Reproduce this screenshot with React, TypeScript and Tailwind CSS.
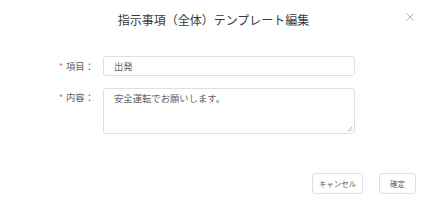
export default function App() {
  return (
    <div
      className="w-[427px] h-[203px] bg-white relative overflow-hidden"
      style={{ fontFamily: '"Noto Sans CJK JP", "Noto Sans", sans-serif' }}
    >
      <div className="h-[38px] flex items-center justify-center">
        <span className="text-[12px] leading-[16px] text-[#3a3a3a] mt-[1px]">
          指示事項（全体）テンプレート編集
        </span>
      </div>
      <button className="absolute left-[404px] top-[11px] w-[12px] h-[12px] flex items-center justify-center text-[#b0b3b8]">
        <svg width="8" height="8" viewBox="0 0 8 8" fill="none" stroke="currentColor" strokeWidth="1">
          <path d="M0.5 0.5 L7.5 7.5 M7.5 0.5 L0.5 7.5" />
        </svg>
      </button>
      <div className="pt-[18px] flex flex-col gap-[12px]">
        <div className="flex items-center">
          <div className="w-[103px] pr-[9px] flex justify-end items-center text-[9.33px] text-[#606266]">
            <span className="text-[#f56c6c] mr-[3px]">*</span>
            <span>項目：</span>
          </div>
          <div className="w-[252px] h-[20px] border border-[#dcdfe6] rounded-[3px] flex items-center px-[10px] text-[9.33px] text-[#606266]">
            出発
          </div>
        </div>
        <div className="flex items-start">
          <div className="w-[103px] pr-[9px] pt-[2px] flex justify-end items-center text-[9.33px] text-[#606266]">
            <span className="text-[#f56c6c] mr-[3px]">*</span>
            <span>内容：</span>
          </div>
          <div className="relative w-[252px] h-[46px] border border-[#dcdfe6] rounded-[3px] px-[10px] pt-[2px] text-[9.33px] leading-[14px] text-[#606266]">
            安全運転でお願いします。
            <svg className="absolute right-[1px] bottom-[1px]" width="6" height="6" viewBox="0 0 6 6" stroke="#999" strokeWidth="0.7">
              <path d="M5.5 0.5 L0.5 5.5 M5.5 3 L3 5.5" />
            </svg>
          </div>
        </div>
      </div>
      <div className="absolute right-[11px] top-[173px] flex gap-[16px]">
        <button className="w-[51px] h-[21px] border border-[#dcdfe6] rounded-[3px] text-[7.5px] text-[#606266] flex items-center justify-center">
          キャンセル
        </button>
        <button className="w-[37px] h-[21px] border border-[#dcdfe6] rounded-[3px] text-[7.5px] text-[#606266] flex items-center justify-center">
          確定
        </button>
      </div>
    </div>
  );
}
